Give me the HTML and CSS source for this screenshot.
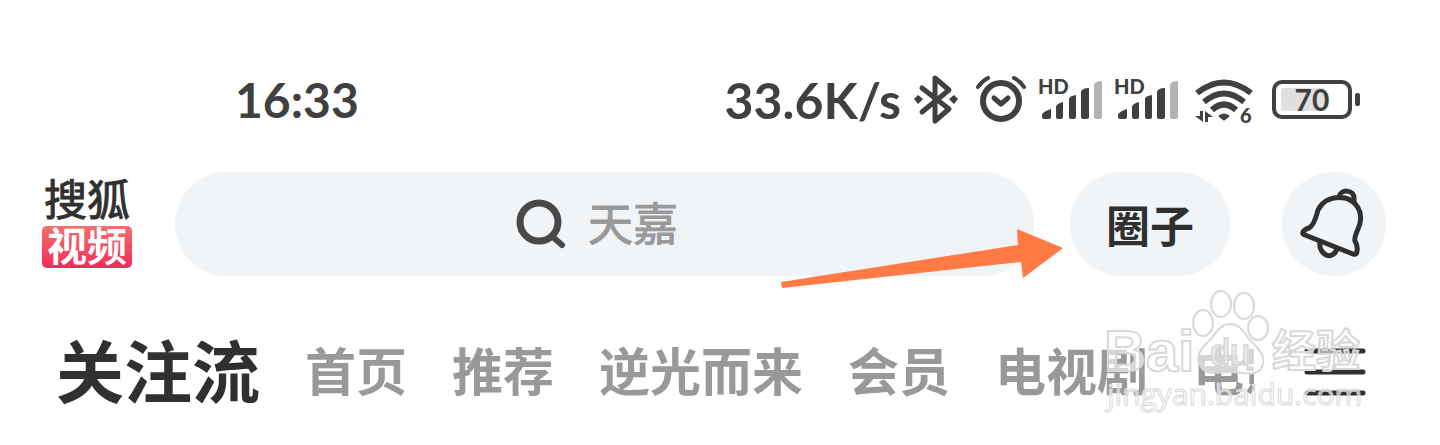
FILE: index.html
```html
<!DOCTYPE html>
<html lang="zh-CN">
<head>
    <meta charset="utf-8">
    <meta name="viewport" content="width=device-width, initial-scale=1.0">
    <title>搜狐视频</title>
    <link rel="stylesheet" href="styles.css">
</head>
<body>
    <div class="status-bar">
        <div class="status-time">16:33</div>
        <div class="status-icons">
            <span class="net-speed">33.6K/s</span>
            <svg class="line-icon" width="48" height="50" viewBox="0 0 48 50">
                <path d="M8 13 35 34 21 46V3L35 15 8 37" stroke-width="5"/>
                <path class="solid" d="M0 24 4 20 9 24 4 29ZM35 24 40 20 44 24 40 29Z"/>
            </svg>
            <svg class="line-icon" width="51" height="50" viewBox="0 0 51 50">
                <circle cx="26" cy="26" r="18" stroke-width="6"/>
                <path d="M19 23 26 29 33 23" stroke-width="5"/>
                <path d="M3 12Q7 6 13 3M39 3Q45 6 49 12" stroke-width="4"/>
            </svg>
            <svg class="solid-icon" width="63" height="50" viewBox="0 0 63 50">
                <text x="-1" y="19" class="icon-text">HD</text>
                <path d="M3 40Q3 37 12 34V42Q12 44 10 44H5Q3 44 3 42ZM17 32Q17 29 24 27V42Q24 44 22 44H19Q17 44 17 42ZM30 24Q30 21 37 20V42Q37 44 35 44H32Q30 44 30 42ZM42 17Q43 13 50 13V42Q50 44 48 44H44Q42 44 42 42Z"/>
                <path class="weak" d="M55 10Q56 6 63 6V42Q63 44 61 44H57Q55 44 55 42Z"/>
            </svg>
            <svg class="solid-icon" width="63" height="50" viewBox="0 0 63 50">
                <text x="-1" y="19" class="icon-text">HD</text>
                <path d="M3 40Q3 37 12 34V42Q12 44 10 44H5Q3 44 3 42ZM17 32Q17 29 24 27V42Q24 44 22 44H19Q17 44 17 42ZM30 24Q30 21 37 20V42Q37 44 35 44H32Q30 44 30 42ZM42 17Q43 13 50 13V42Q50 44 48 44H44Q42 44 42 42Z"/>
                <path class="weak" d="M55 10Q56 6 63 6V42Q63 44 61 44H57Q55 44 55 42Z"/>
            </svg>
            <svg class="solid-icon" width="68" height="50" viewBox="0 0 68 50">
                <g class="wifi-waves">
                    <path d="M6 18Q33-3 60 18M13 27Q33 10 53 27M21 35Q33 24 45 35"/>
                </g>
                <path d="M27 41Q33 36 39 41L34 45Q33 46 32 45Z"/>
                <path d="M9 36H12V47L4 41H9ZM14 36 22 42H17V47H14Z"/>
                <text x="49" y="48" class="icon-text">6</text>
            </svg>
            <svg class="solid-icon" width="88" height="50" viewBox="0 0 88 50">
                <rect class="battery-level" x="9" y="13" width="44" height="23" rx="3"/>
                <rect class="battery-case" x="2" y="7" width="76" height="35" rx="8"/>
                <rect x="83" y="18" width="5" height="13" rx="2"/>
                <text x="40" y="36" text-anchor="middle" class="battery-text">70</text>
            </svg>
        </div>
    </div>

    <header class="top-bar">
        <a class="logo" href="#">
            <span class="logo-top">搜狐</span>
            <span class="logo-bottom">视频</span>
        </a>
        <div class="search-wrap">
            <label class="search-box">
                <svg width="52" height="52" viewBox="0 0 52 52">
                    <circle cx="23" cy="24" r="19" stroke-width="7"/>
                    <path d="M38 40 46 47" stroke-width="6"/>
                </svg>
                <input type="text" placeholder="天嘉" aria-label="搜索">
            </label>
            <svg class="arrow" width="283" height="60" viewBox="0 0 283 60">
                <path d="M0 53 237 16 236 0 282 19 242 49 240 33 1 59Z"/>
            </svg>
        </div>
        <button class="circle-button">圈子</button>
        <button class="bell-button" aria-label="消息">
            <svg width="72" height="72" viewBox="0 0 72 72">
                <path d="M5 44Q4 46 7 47L55 66Q59 67 59 63 60 58 57 53 56 50 60 41C68 23 56 12 47 10 35 8 25 12 20 22 18 30 15 38 11 40Q7 41 5 44Z"/>
                <path d="M41 9C42 1 56 1 56 10V15M22 54C20 66 34 74 39 61"/>
            </svg>
        </button>
    </header>

    <nav class="tabs">
        <div class="tab-list">
            <a class="active" href="#">关注流</a>
            <a href="#">首页</a>
            <a href="#">推荐</a>
            <a href="#">逆光而来</a>
            <a href="#">会员</a>
            <a href="#">电视剧</a>
            <a href="#">电影</a>
        </div>
        <button class="menu-button" aria-label="更多频道">
            <svg width="62" height="50" viewBox="0 0 62 50">
                <path d="M3 4H59M3 25H59M3 46H59"/>
            </svg>
        </button>
    </nav>

    <svg class="watermark" width="270" height="132" viewBox="0 0 270 132">
        <text x="4" y="86" class="mark-latin">Bai</text>
        <g class="paw">
            <ellipse cx="103" cy="38" rx="10" ry="13"/>
            <ellipse cx="121" cy="19" rx="10" ry="13"/>
            <ellipse cx="144" cy="21" rx="10" ry="13"/>
            <ellipse cx="158" cy="43" rx="10" ry="12"/>
            <path d="M130 39C119 39 116 50 107 58 98 66 96 74 101 82 107 91 118 87 130 87 142 87 154 92 161 84 167 74 161 66 153 58 145 51 142 39 130 39Z"/>
        </g>
        <text x="110" y="80" class="mark-du">du</text>
        <text x="172" y="82" class="mark-cjk">经验</text>
        <text x="7" y="120" class="mark-url">jingyan.baidu.com</text>
    </svg>
</body>
</html>
```

FILE: styles.css
```css
:root {
    --dark: #404040;
    --text-color: #303030;
    --gray: #999;
    --pill: #f0f4f7;
    --orange: #ff7a45;
    --cjk: "Liberation Sans", "Noto Sans CJK SC", sans-serif;
}

* {
    box-sizing: border-box;
    margin: 0;
    padding: 0;
}

body {
    position: relative;
    padding-bottom: 32px;
    background-color: #fff;
    color: var(--text-color);
    font-family: var(--cjk);
}

a {
    color: inherit;
    text-decoration: none;
}

button {
    border: none;
    background: none;
    color: inherit;
    font-family: inherit;
    cursor: pointer;
}

svg {
    display: block;
    flex-shrink: 0;
    overflow: visible;
}

/* status bar */
.status-bar {
    display: flex;
    justify-content: space-between;
    padding: 75px 80px 0 235px;
    color: var(--dark);
    font-family: Lato, sans-serif;
    font-size: 50px;
    font-weight: 700;
    line-height: 50px;
}

.status-time {
    font-size: 48px;
}

.status-icons {
    display: flex;
    gap: 13px;
}

.line-icon {
    fill: none;
    stroke: var(--dark);
    stroke-linecap: round;
    stroke-linejoin: round;
}

.line-icon .solid {
    fill: var(--dark);
    stroke: none;
}

.solid-icon {
    fill: var(--dark);
}

.solid-icon .weak {
    fill: #b3b3b3;
}

.icon-text {
    font-size: 20px;
    font-weight: 900;
}

.wifi-waves {
    fill: none;
    stroke: var(--dark);
    stroke-width: 6px;
}

.solid-icon .battery-level {
    fill: #e0e0e0;
}

.solid-icon .battery-case {
    fill: none;
    stroke: var(--dark);
    stroke-width: 4px;
}

.battery-text {
    font-size: 30px;
    font-weight: 700;
}

/* logo, search, buttons */
.top-bar {
    display: flex;
    align-items: center;
    margin-top: 47px;
    padding: 0 54px 0 42px;
}

.logo {
    display: flex;
    flex-direction: column;
    width: 90px;
    margin-right: 43px;
    padding-bottom: 4px;
    text-align: center;
}

.logo-top {
    font-size: 43px;
    line-height: 50px;
    -webkit-text-stroke: 1px var(--text-color);
}

.logo-bottom {
    height: 42px;
    border-radius: 5px;
    background: linear-gradient(#f0706c, #f52a5a);
    color: #fff;
    font-size: 40px;
    font-weight: 700;
    line-height: 42px;
}

.search-wrap {
    position: relative;
    flex: 1;
    margin-right: 36px;
}

.search-box {
    display: flex;
    align-items: center;
    justify-content: center;
    gap: 20px;
    height: 104px;
    border-radius: 52px;
    background-color: var(--pill);
}

.search-box svg {
    fill: none;
    stroke: #484848;
    stroke-linecap: round;
}

.search-box input {
    width: 105px;
    padding-top: 4px;
    border: none;
    outline: none;
    background: none;
    font-family: inherit;
    font-size: 45px;
}

.search-box input::placeholder {
    color: var(--gray);
    opacity: 1;
    -webkit-text-stroke: 1px var(--gray);
}

.arrow {
    position: absolute;
    right: -30px;
    top: 57px;
    fill: var(--orange);
    pointer-events: none;
}

.circle-button {
    width: 160px;
    height: 104px;
    margin-right: 52px;
    border-radius: 52px;
    background-color: var(--pill);
    font-size: 44px;
    font-weight: 700;
}

.bell-button {
    display: flex;
    align-items: center;
    justify-content: center;
    width: 104px;
    height: 104px;
    border-radius: 50%;
    background-color: var(--pill);
}

.bell-button svg {
    fill: none;
    stroke: #303030;
    stroke-width: 5px;
    stroke-linejoin: round;
}

/* channel tabs */
.tabs {
    display: flex;
    align-items: center;
    margin-top: 58px;
    padding: 0 74px 0 56px;
}

.tab-list {
    display: flex;
    align-items: center;
    flex: 1;
    gap: 45px;
    height: 76px;
    min-width: 0;
    margin-right: 50px;
    padding-top: 4px;
    overflow: hidden;
    white-space: nowrap;
    color: var(--gray);
    font-size: 51px;
    font-weight: 700;
    line-height: 72px;
}

.tab-list .active {
    color: var(--text-color);
    font-size: 68px;
}

.menu-button svg {
    fill: none;
    stroke: #303030;
    stroke-width: 5px;
    stroke-linecap: round;
}

/* watermark over the tabs */
.watermark {
    position: absolute;
    top: 285px;
    right: 70px;
    fill: rgba(255, 255, 255, 0.6);
    stroke: #d8d8d8;
    stroke-width: 2px;
    pointer-events: none;
}

.mark-latin {
    font-size: 58px;
    font-weight: 700;
}

.mark-du {
    font-size: 36px;
}

.mark-cjk {
    font-size: 44px;
    font-weight: 700;
}

.mark-url {
    font-family: "Open Sans", sans-serif;
    font-size: 30px;
    stroke-width: 1px;
}
```
